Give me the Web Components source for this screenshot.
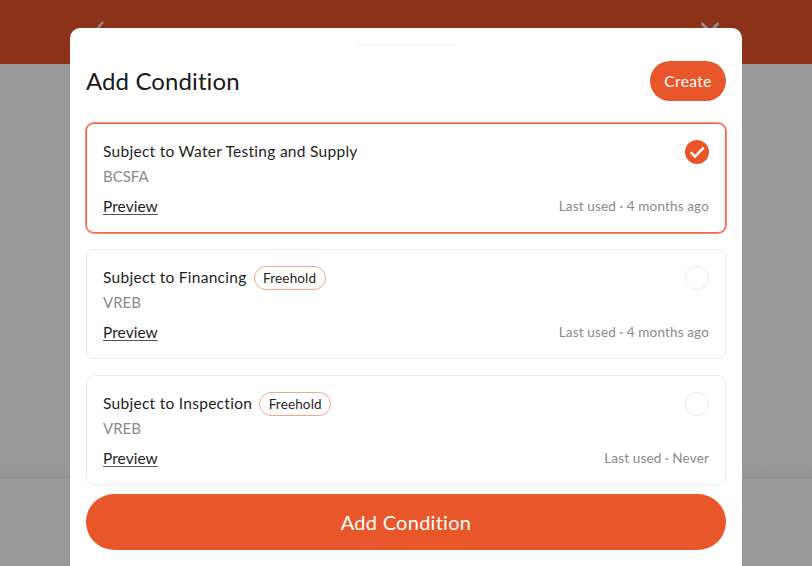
<!DOCTYPE html>
<html>
<head>
<meta charset="utf-8">
<style>
html, body { margin: 0; height: 100%; overflow: hidden; }
body { font-family: "Lato", "Noto Sans", sans-serif; }
</style>
</head>
<body>
<page-backdrop>
  <condition-sheet>
    <span slot="title">Add Condition</span>
    <condition-card selected name="Subject to Water Testing and Supply" board="BCSFA" used="Last used · 4 months ago"></condition-card>
    <condition-card name="Subject to Financing" tag="Freehold" board="VREB" used="Last used · 4 months ago"></condition-card>
    <condition-card name="Subject to Inspection" tag="Freehold" board="VREB" used="Last used · Never"></condition-card>
  </condition-sheet>
</page-backdrop>
<script>
const backdropTemplate = document.createElement("template");
backdropTemplate.innerHTML = `<style>
:host { display: flex; flex-direction: column; height: 566px; background: #999; position: relative; overflow: hidden; }
.top { height: 64px; background: #8b3219; display: flex; justify-content: space-between; padding: 20px 92px 0 92px; box-sizing: border-box; }
svg { display: block; }
.spacer { flex: 1; background: linear-gradient(#999 0, #999 calc(100% - 16px), #959595 100%); }
.bottom { height: 89px; border-top: 1px solid #8c8c8c; box-sizing: border-box; }
</style>
<div class="top">
  <svg width="16" height="24" viewBox="0 0 16 24" fill="none" stroke="#8d9499" stroke-width="2"><path d="M11 2 L4 10 L11 18"/></svg>
  <svg width="20" height="24" viewBox="0 0 20 24" fill="none" stroke="#8d9499" stroke-width="2.5"><path d="M1.5 3 L18.5 20 M18.5 3 L1.5 20"/></svg>
</div>
<div class="spacer"></div>
<div class="bottom"></div>
<slot></slot>`;

class PageBackdrop extends HTMLElement {
  constructor() {
    super();
    this.attachShadow({ mode: "open" }).appendChild(backdropTemplate.content.cloneNode(true));
  }
}
customElements.define("page-backdrop", PageBackdrop);

const sheetTemplate = document.createElement("template");
sheetTemplate.innerHTML = `<style>
:host { position: absolute; left: 70px; top: 28px; width: 672px; height: 538px; background: #fff; border-radius: 10px 10px 0 0; padding: 16px 16px 0; box-sizing: border-box; display: flex; flex-direction: column; }
.handle { width: 100px; height: 1px; margin: 0 auto; background: #f4f4f4; }
header { display: flex; justify-content: space-between; align-items: center; margin-top: 16px; height: 40px; }
h1 { margin: 0; font-size: 24px; font-weight: 400; color: #1a1a1a; letter-spacing: 0.1px; position: relative; top: -1px; }
.create { width: 76px; height: 40px; border-radius: 20px; border: 0; background: #e9562a; color: #fff; font: inherit; font-size: 15.5px; letter-spacing: 0.4px; padding: 0 0 1px; }
.list { display: flex; flex-direction: column; gap: 16px; margin-top: 22px; }
.add { margin-top: 9px; height: 56px; width: 100%; border: 0; border-radius: 28px; background: #e9562a; color: #fff; font: inherit; font-size: 20px; letter-spacing: 0.27px; padding: 0 0 1px; }
</style>
<div class="handle"></div>
<header><h1><slot name="title"></slot></h1><button class="create">Create</button></header>
<div class="list"><slot></slot></div>
<button class="add">Add Condition</button>`;

class ConditionSheet extends HTMLElement {
  constructor() {
    super();
    this.attachShadow({ mode: "open" }).appendChild(sheetTemplate.content.cloneNode(true));
  }
}
customElements.define("condition-sheet", ConditionSheet);

const cardTemplate = document.createElement("template");
cardTemplate.innerHTML = `<style>
:host { display: block; height: 110px; box-sizing: border-box; border: 1px solid #ececec; border-radius: 8px; padding: 15px 16px 0; background: #fff; color: #1e1e1e; }
:host([selected]) { border-color: #ee6a45; box-shadow: 0 0 0 1px #f58f72; }
.row { display: flex; justify-content: space-between; align-items: center; }
.name { display: flex; align-items: center; gap: 7px; font-size: 15.5px; letter-spacing: 0.28px; height: 24px; margin-bottom: 1px; }
.tag { display: none; height: 24px; box-sizing: border-box; border: 1px solid #f3a58e; border-radius: 12px; padding: 0 8.5px; font-size: 13.5px; letter-spacing: 0.15px; line-height: 22px; position: relative; top: 0.5px; }
.board { font-size: 15px; color: #8a8a8a; line-height: 24px; }
.foot { margin-top: 6px; height: 24px; }
a { font-size: 15.5px; letter-spacing: 0.05px; color: #1e1e1e; text-decoration: underline; text-decoration-color: #555; text-underline-offset: 2px; }
.used { font-size: 13.5px; letter-spacing: 0.15px; color: #8a8a8a; }
.radio { width: 24px; height: 24px; box-sizing: border-box; border: 1px solid #e8e8e8; border-radius: 50%; }
svg { display: none; width: 24px; height: 24px; }
:host([selected]) .radio { display: none; }
:host([selected]) svg { display: block; }
</style>
<div class="row">
  <div class="name"><span class="title"></span><span class="tag"></span></div>
  <div class="radio"></div>
  <svg viewBox="0 0 24 24"><circle cx="12" cy="12" r="12" fill="#e9562a"/><path d="M5.8 12.3 L10 16.5 L18.6 7.6" fill="none" stroke="#fff" stroke-width="2.3"/></svg>
</div>
<div class="board"></div>
<div class="row foot"><a>Preview</a><span class="used"></span></div>`;

class ConditionCard extends HTMLElement {
  constructor() {
    super();
    this.attachShadow({ mode: "open" }).appendChild(cardTemplate.content.cloneNode(true));
  }
  connectedCallback() {
    const root = this.shadowRoot;
    root.querySelector(".title").textContent = this.getAttribute("name");
    root.querySelector(".board").textContent = this.getAttribute("board");
    root.querySelector(".used").textContent = this.getAttribute("used");
    const tag = this.getAttribute("tag");
    if (tag) {
      const el = root.querySelector(".tag");
      el.textContent = tag;
      el.style.display = "block";
    }
  }
}
customElements.define("condition-card", ConditionCard);
</script>
</body>
</html>
